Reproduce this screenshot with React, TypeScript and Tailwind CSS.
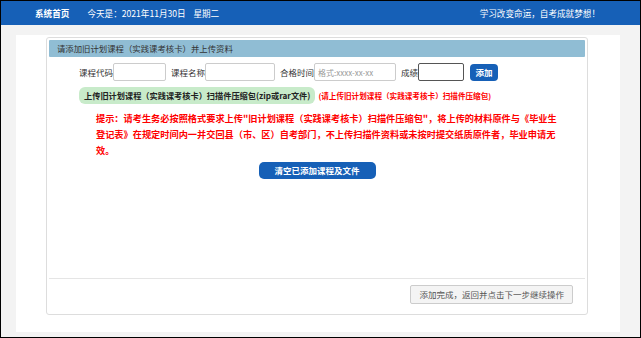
import React from 'react';

const font = '[font-family:"Noto_Sans_CJK_SC","Noto_Sans",sans-serif]';

const Field = ({ label, width, placeholder, dark }: { label: string; width: string; placeholder?: string; dark?: boolean }) => (
  <div className="flex items-center">
    <span className="text-[8.5px] text-[#333]">{label}</span>
    <input
      className={`${width} h-[18px] rounded-[2px] bg-white px-[3px] text-[8px] outline-none placeholder:text-[#999] ${
        dark ? 'border-[1.5px] border-[#555]' : 'border border-[#ccc]'
      }`}
      placeholder={placeholder}
    />
  </div>
);

export default function App() {
  return (
    <div className={`w-[641px] h-[338px] border border-black bg-[#f3f3f3] flex flex-col overflow-hidden ${font}`}>
      {/* header */}
      <div className="h-[24px] shrink-0 bg-[#1660b7] flex items-center text-white text-[8.6px]">
        <span className="ml-[34px] font-bold">系统首页</span>
        <span className="ml-[18px]">今天是：2021年11月30日&nbsp;&nbsp;&nbsp;&nbsp;星期二</span>
        <span className="ml-auto mr-[40px]">学习改变命运，自考成就梦想！</span>
      </div>

      <div className="flex-1 pt-[10px] pl-[15px] pr-[20px] pb-[5px] flex">
        <div className="flex-1 bg-white pl-[30px] pr-[30px] pt-[2px] pb-[17px] flex">
          <div className="w-[542px] border border-[#ddd] rounded-[3px] p-[2px] flex flex-col">
            <div className="h-[17px] bg-[#90bdd4] rounded-[1px] flex items-center pl-[8px] text-[8.4px] text-[#333]">
              请添加旧计划课程（实践课考核卡）并上传资料
            </div>

            <div className="flex-1 flex flex-col">
              {/* form row */}
              <div className="mt-[6px] ml-[30px] flex items-center gap-[5px]">
                <Field label="课程代码" width="w-[53px]" />
                <Field label="课程名称" width="w-[70px]" />
                <Field label="合格时间" width="w-[82px]" placeholder="格式:xxxx-xx-xx" />
                <Field label="成绩" width="w-[46px]" dark />
                <button className="ml-[1px] h-[17px] w-[28px] rounded-[4px] bg-[#1660b7] text-white text-[8.5px] font-bold">
                  添加
                </button>
              </div>

              {/* upload row */}
              <div className="mt-[6px] ml-[30px] flex items-center">
                <div className="h-[17px] rounded-[6px] bg-[#c8ebca] px-[5px] flex items-center text-[8.2px] font-semibold text-[#222] whitespace-nowrap">
                  上传旧计划课程（实践课考核卡）扫描件压缩包(zip或rar文件)
                </div>
                <span className="ml-[3px] text-[7.6px] font-semibold text-[#ff0000] whitespace-nowrap">
                  (请上传旧计划课程（实践课考核卡）扫描件压缩包)
                </span>
              </div>

              {/* notice */}
              <div className="mt-[6px] ml-[47px] text-[9.2px] leading-[16px] font-semibold text-[#ff0000] whitespace-nowrap">
                <div>提示：请考生务必按照格式要求上传"旧计划课程（实践课考核卡）扫描件压缩包"，将上传的材料原件与《毕业生</div>
                <div>登记表》在规定时间内一并交回县（市、区）自考部门，不上传扫描件资料或未按时提交纸质原件者，毕业申请无</div>
                <div>效。</div>
              </div>

              <div className="mt-[4px] flex justify-center">
                <button className="h-[17px] w-[117px] rounded-[5px] bg-[#1660b7] text-white text-[8.5px] font-bold">
                  清空已添加课程及文件
                </button>
              </div>
            </div>

            {/* footer */}
            <div className="h-[34px] shrink-0 border-t border-[#e5e5e5] flex items-start justify-end pr-[12px] pt-[6px]">
              <button className="h-[19px] px-[8px] rounded-[2px] border border-[#ccc] bg-[#f4f4f4] text-[8.5px] text-[#555]">
                添加完成，返回并点击下一步继续操作
              </button>
            </div>
          </div>
        </div>
      </div>
    </div>
  );
}
